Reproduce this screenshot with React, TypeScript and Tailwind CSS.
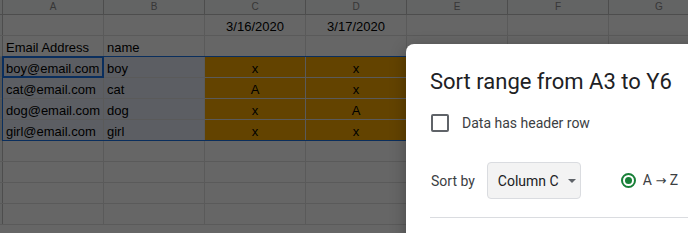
import React from "react";

const cols = ["A", "B", "C", "D", "E", "F", "G"];

type Row = { cells: string[]; sel?: boolean };

const rows: Row[] = [
  { cells: ["", "", "3/16/2020", "3/17/2020", "", "", ""] },
  { cells: ["Email Address", "name", "", "", "", "", ""] },
  { cells: ["boy@email.com", "boy", "x", "x", "", "", ""], sel: true },
  { cells: ["cat@email.com", "cat", "A", "x", "", "", ""], sel: true },
  { cells: ["dog@email.com", "dog", "x", "A", "", "", ""], sel: true },
  { cells: ["girl@email.com", "girl", "x", "x", "", "", ""], sel: true },
  { cells: ["", "", "", "", "", "", ""] },
  { cells: ["", "", "", "", "", "", ""] },
  { cells: ["", "", "", "", "", "", ""] },
  { cells: ["", "", "", "", "", "", ""] },
];

function cellBg(row: Row, ci: number) {
  if (row.sel && (ci === 2 || ci === 3 || ci === 4)) return "bg-[#f7a900]";
  if (row.sel) return "bg-[#e6ecf7]";
  return "bg-white";
}

export default function App() {
  return (
    <div className="relative w-[688px] h-[233px] overflow-hidden bg-white" style={{ fontFamily: "Arial, 'Liberation Sans', sans-serif" }}>
      {/* sheet */}
      <div className="flex flex-col">
        <div className="flex h-[15px] border-b border-[#c0c0c0] bg-[#f8f9fa]">
          <div className="w-[3px] shrink-0 border-r border-[#c0c0c0]" />
          {cols.map((c) => (
            <div key={c} className="w-[101px] shrink-0 border-r border-[#c0c0c0] flex items-center justify-center text-[10px] leading-[14px] text-[#8a8a8a]">
              {c}
            </div>
          ))}
        </div>
        {rows.map((row, ri) => (
          <div key={ri} className="flex h-[21px] border-b border-[#e2e2e2]">
            <div className={`w-[3px] shrink-0 border-r border-[#c0c0c0] ${row.sel ? "bg-[#d0d4da]" : "bg-[#f8f9fa]"}`} />
            {row.cells.map((t, ci) => {
              const center = ci >= 2;
              return (
                <div
                  key={ci}
                  className={`w-[101px] shrink-0 border-r border-[#e2e2e2] flex items-end text-[13px] leading-[17px] text-black whitespace-nowrap overflow-visible ${cellBg(row, ci)} ${center ? "justify-center" : "pl-[3px]"}`}
                >
                  {t}
                </div>
              );
            })}
          </div>
        ))}
      </div>

      {/* selection range */}
      <div className="absolute left-[2px] top-[56px] w-[720px] h-[85px] border border-[#1a73e8]" />
      <div className="absolute left-[2px] top-[56px] w-[102px] h-[22px] border-2 border-[#1a73e8]" />

      {/* dim overlay */}
      <div className="absolute inset-0 bg-black/60" />

      {/* dialog */}
      <div className="absolute left-[406px] top-[44px] w-[420px] h-[260px] bg-white rounded-tl-[8px] shadow-[0_4px_16px_rgba(0,0,0,0.3)] pl-[24px] pt-[24px]" style={{ fontFamily: "Roboto, 'Liberation Sans', sans-serif" }}>
        <div className="text-[22px] leading-[28px] text-[#202124]">Sort range from A3 to Y6</div>
        <div className="flex items-center mt-[17px] ml-[1px]">
          <div className="w-[18px] h-[18px] border-2 border-[#5f6368] rounded-[2px]" />
          <div className="ml-[13px] text-[14px] leading-[20px] text-[#3c4043]">Data has header row</div>
        </div>
        <div className="flex items-center mt-[29px] ml-[1px]">
          <div className="text-[14px] leading-[20px] text-[#3c4043]">Sort by</div>
          <div className="ml-[12px] w-[94px] h-[37px] rounded-[4px] border border-[#dadce0] bg-[#f3f3f3] flex items-center pl-[10px]">
            <span className="text-[14px] leading-[20px] text-[#202124]">Column C</span>
            <svg className="ml-[9px]" width="8" height="4" viewBox="0 0 8 4"><path d="M0 0h8L4 4z" fill="#5f6368" /></svg>
          </div>
          <div className="ml-[40px] flex items-center">
            <div className="w-[15px] h-[15px] rounded-full border-2 border-[#188038] flex items-center justify-center">
              <div className="w-[7px] h-[7px] rounded-full bg-[#188038]" />
            </div>
            <span className="ml-[7px] text-[14px] leading-[20px] text-[#3c4043]">
              A <span style={{ fontFamily: "'DejaVu Sans', sans-serif" }} className="text-[13px]">→</span> Z
            </span>
          </div>
        </div>
        <div className="mt-[18px] h-px bg-[#dadce0]" />
      </div>
    </div>
  );
}
